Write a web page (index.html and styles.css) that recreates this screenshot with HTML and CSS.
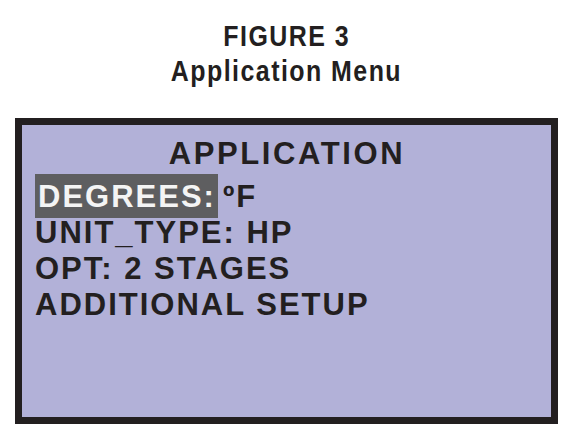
FILE: index.html
```html
<!DOCTYPE html>
<html>
<head>
    <title>Figure 3 - Application Menu</title>
    <meta charset="UTF-8">
    <meta name="viewport" content="width=device-width, initial-scale=1.0">
    <link rel="stylesheet" href="styles.css">
</head>
<body>
    <div class="caption">
        <div><span class="caption-line">FIGURE 3</span></div>
        <div><span class="caption-line">Application Menu</span></div>
    </div>

    <div class="lcd">
        <div class="lcd-title">APPLICATION</div>
        <div class="lcd-row"><span class="selected">DEGREES:</span><span class="value">ºF</span></div>
        <div class="lcd-row">UNIT_TYPE: HP</div>
        <div class="lcd-row">OPT: 2 STAGES</div>
        <div class="lcd-row">ADDITIONAL SETUP</div>
    </div>
</body>
</html>
```

FILE: styles.css
```css
body {
    margin: 0;
    background-color: #fff;
    color: #231f20;
}
.caption {
    padding: 19px 6px 0 0;
    text-align: center;
    font-family: 'Liberation Sans', Arial, sans-serif;
    font-weight: bold;
    font-size: 29px;
    line-height: 35px;
}
/* no condensed face installed, so squeeze the regular bold */
.caption-line {
    display: inline-block;
    transform: scaleX(0.86);
    letter-spacing: 1.7px;
}
.lcd {
    margin: 29px 0 0 15px;
    width: 516px;
    height: 281px;
    border: 7px solid #231f20;
    background-color: #b2b1d8;
    padding: 11px 0 0 13px;
    font-family: 'Liberation Sans', Arial, sans-serif;
    font-weight: bold;
    font-size: 31px;
    line-height: 36px;
}
.lcd-title {
    text-align: center;
    margin: 0 12px 7px 0;
    letter-spacing: 2.6px;
}
.lcd-row {
    white-space: nowrap;
    letter-spacing: 2px;
}
.selected {
    background-color: #5e5e60;
    color: #f4f4f4;
    padding: 5px 2px 4px 3px;
}
.value {
    margin-left: 5px;
}
```
